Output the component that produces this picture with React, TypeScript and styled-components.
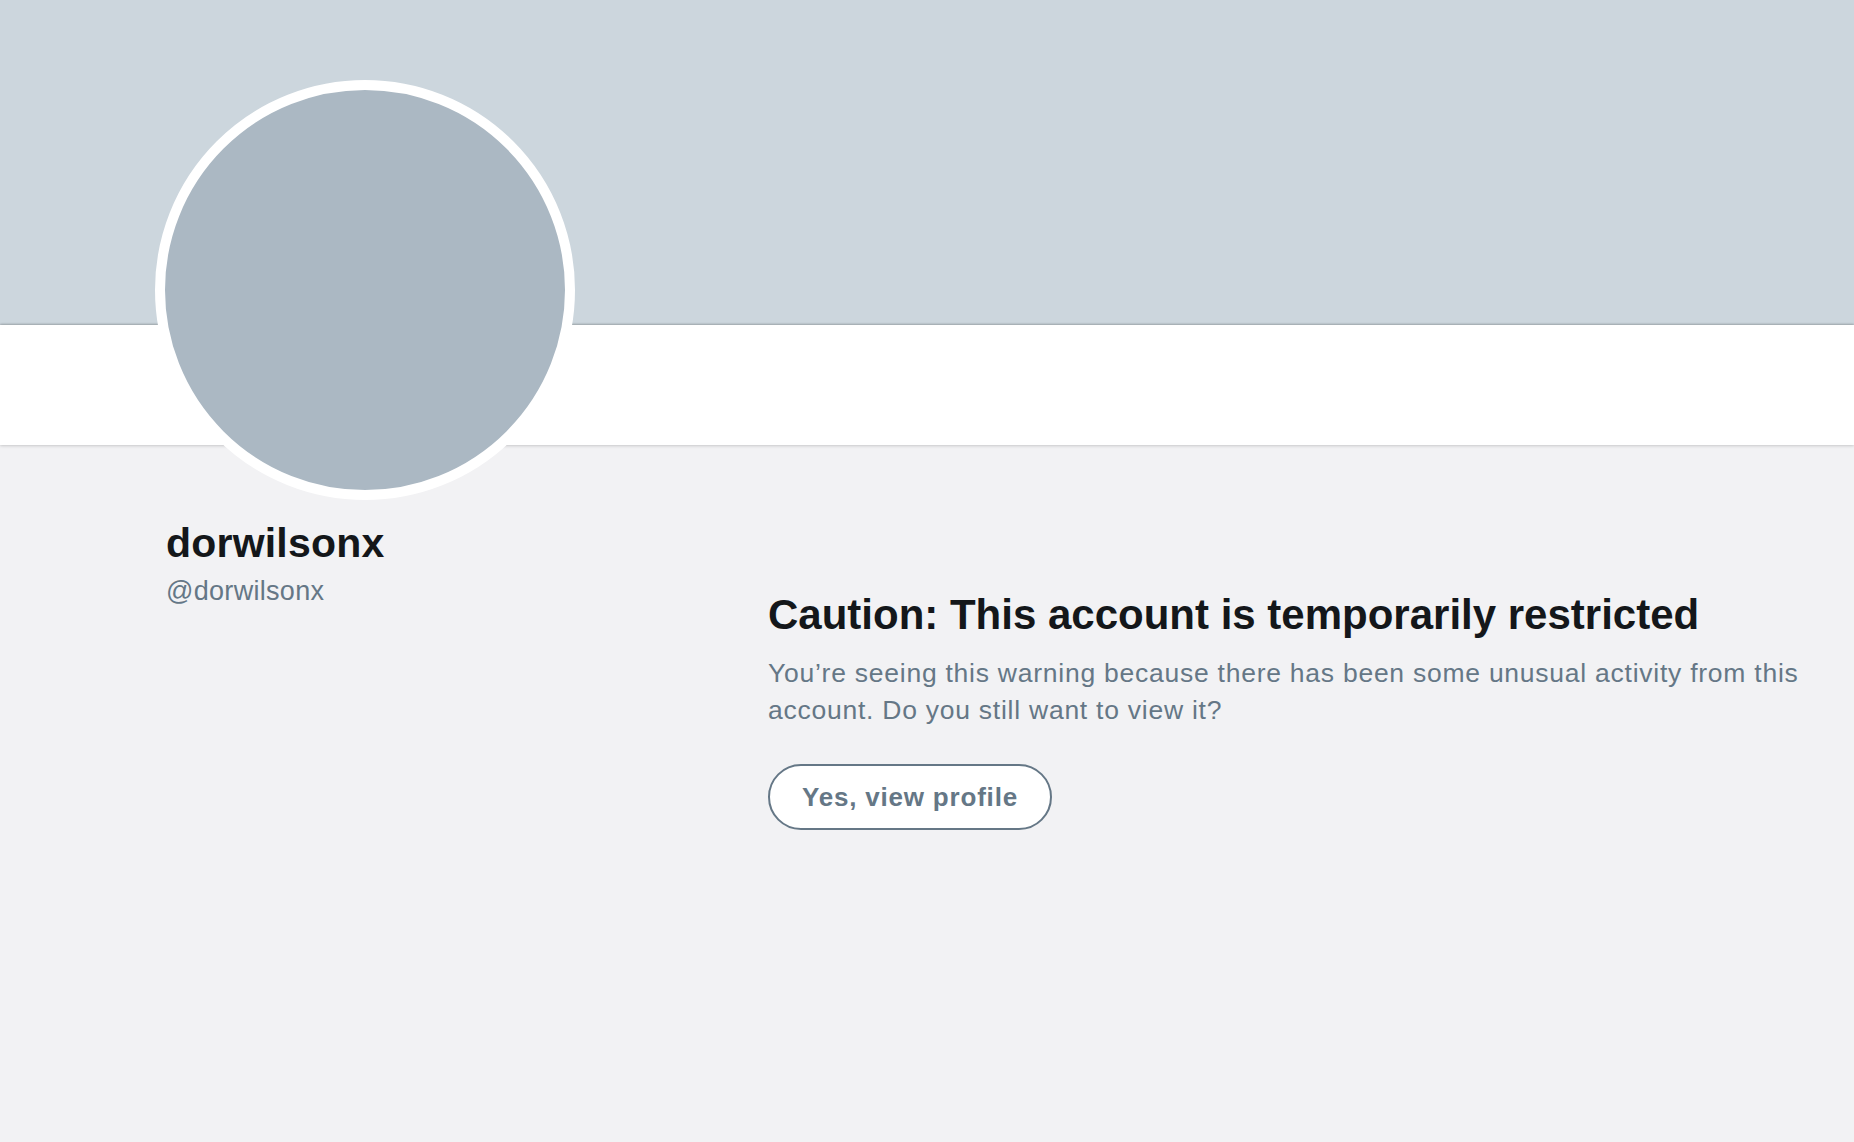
import React from "react";
import styled, { createGlobalStyle } from "styled-components";

const GlobalStyle = createGlobalStyle`
  html, body {
    margin: 0;
    padding: 0;
    background: #f2f2f4;
    font-family: "Liberation Sans", Arial, Helvetica, sans-serif;
  }
  * { box-sizing: border-box; }
`;

const Page = styled.div`
  min-height: 100vh;
  background: #f2f2f4;
  display: flex;
  flex-direction: column;
`;

const Banner = styled.div`
  height: 325px;
  background: #ccd6dd;
`;

const NavBar = styled.div`
  height: 120px;
  background: #ffffff;
  box-shadow: 0 -1px 2px rgba(0, 0, 0, 0.22), 0 1px 3px rgba(0, 0, 0, 0.16);
  position: relative;
  z-index: 1;
`;

const Main = styled.div`
  display: grid;
  grid-template-columns: 613px 1fr;
  padding: 0 30px 0 155px;
`;

const LeftColumn = styled.div`
  display: flex;
  flex-direction: column;
`;

const Avatar = styled.div`
  width: 420px;
  height: 420px;
  margin-top: -365px;
  border-radius: 50%;
  border: 10px solid #ffffff;
  background: #abb8c3;
  position: relative;
  z-index: 2;
`;

const Name = styled.h1`
  margin: 19px 0 0 11px;
  font-size: 41px;
  line-height: 49px;
  font-weight: 700;
  letter-spacing: 0.2px;
  color: #14171a;
`;

const Handle = styled.div`
  margin: 7px 0 0 11px;
  font-size: 27px;
  line-height: 32px;
  letter-spacing: 0.3px;
  color: #657786;
`;

const RightColumn = styled.div`
  padding-top: 145px;
  display: flex;
  flex-direction: column;
  align-items: flex-start;
`;

const Heading = styled.h2`
  margin: 0;
  font-size: 42px;
  line-height: 50px;
  font-weight: 700;
  color: #14171a;
`;

const Message = styled.p`
  margin: 15px 0 0;
  font-size: 26.5px;
  line-height: 37px;
  letter-spacing: 0.75px;
  color: #657786;
`;

const OutlineButton = styled.button`
  margin-top: 35px;
  height: 66px;
  padding: 0 32px;
  border: 2px solid #657786;
  border-radius: 33px;
  background: #ffffff;
  color: #657786;
  font-family: inherit;
  font-size: 26px;
  font-weight: 700;
  letter-spacing: 0.8px;
  cursor: pointer;
`;

export default function App() {
  return (
    <Page>
      <GlobalStyle />
      <Banner />
      <NavBar />
      <Main>
        <LeftColumn>
          <Avatar />
          <Name>dorwilsonx</Name>
          <Handle>@dorwilsonx</Handle>
        </LeftColumn>
        <RightColumn>
          <Heading>Caution: This account is temporarily restricted</Heading>
          <Message>
            You’re seeing this warning because there has been some unusual activity from this
            account. Do you still want to view it?
          </Message>
          <OutlineButton>Yes, view profile</OutlineButton>
        </RightColumn>
      </Main>
    </Page>
  );
}
